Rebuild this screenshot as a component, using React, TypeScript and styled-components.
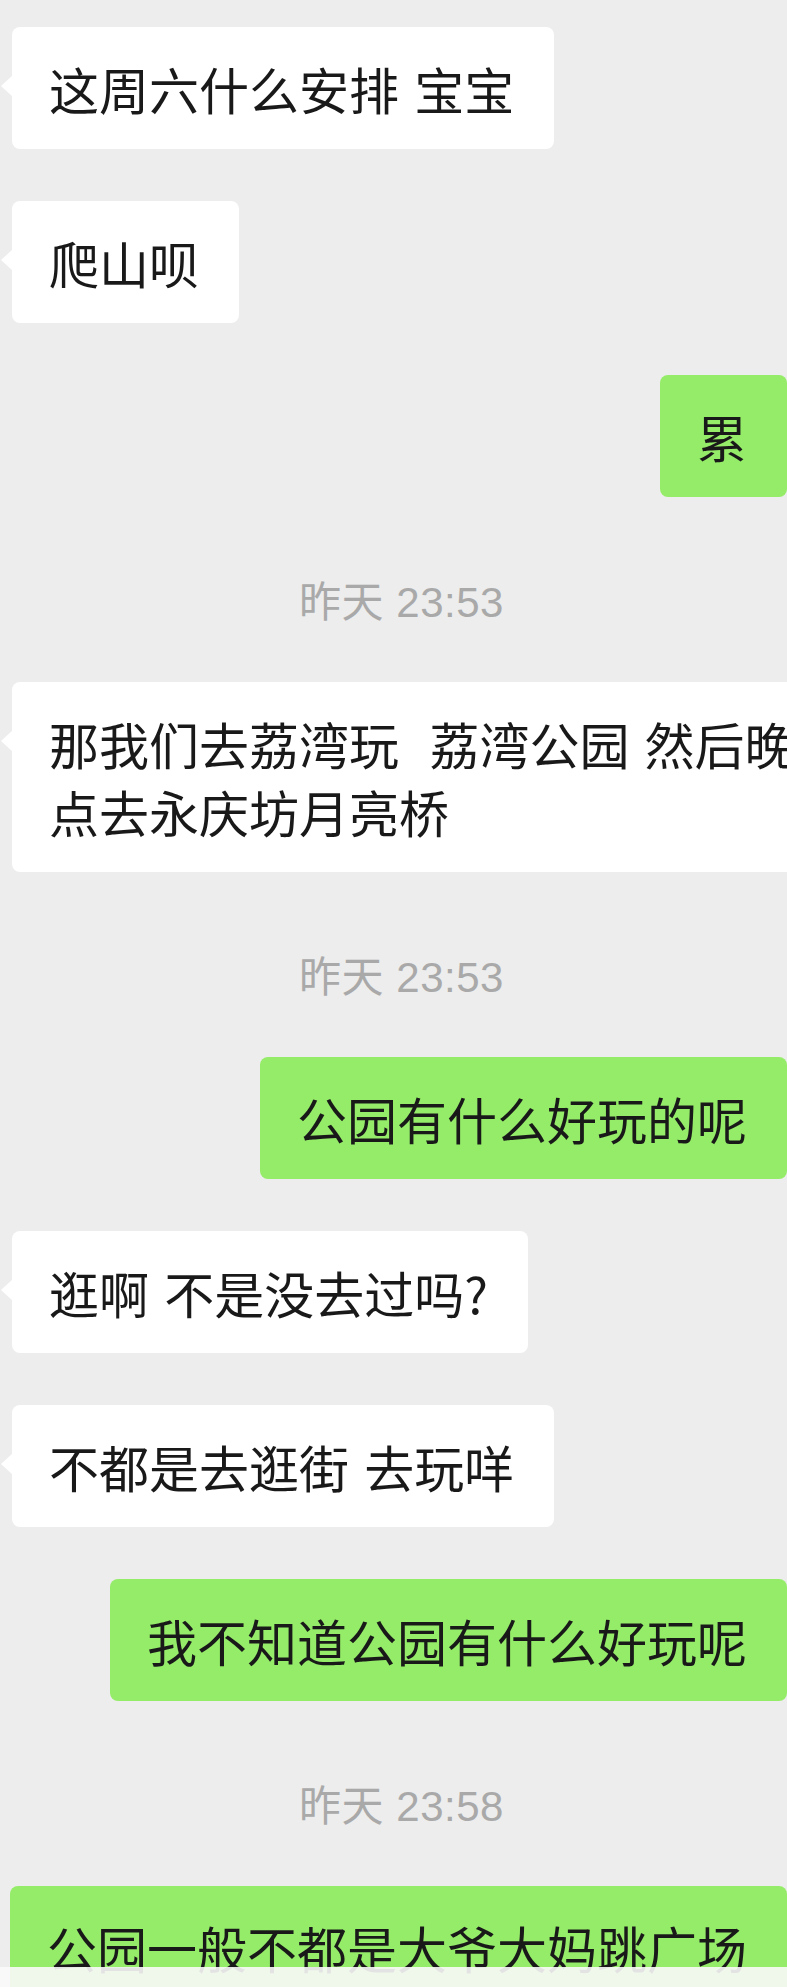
import { FC } from "react";
import styled, { createGlobalStyle } from "styled-components";

type Side = "left" | "right";

type ChatItem =
  | { kind: "msg"; side: Side; text: string }
  | { kind: "time"; text: string };

const chat: ChatItem[] = [
  { kind: "msg", side: "left", text: "这周六什么安排 宝宝" },
  { kind: "msg", side: "left", text: "爬山呗" },
  { kind: "msg", side: "right", text: "累" },
  { kind: "time", text: "昨天 23:53" },
  {
    kind: "msg",
    side: "left",
    text: "那我们去荔湾玩  荔湾公园 然后晚点去永庆坊月亮桥",
  },
  { kind: "time", text: "昨天 23:53" },
  { kind: "msg", side: "right", text: "公园有什么好玩的呢" },
  { kind: "msg", side: "left", text: "逛啊 不是没去过吗?" },
  { kind: "msg", side: "left", text: "不都是去逛街 去玩咩" },
  { kind: "msg", side: "right", text: "我不知道公园有什么好玩呢" },
  { kind: "time", text: "昨天 23:58" },
  { kind: "msg", side: "right", text: "公园一般不都是大爷大妈跳广场" },
];

const GlobalStyle = createGlobalStyle`
  html, body {
    margin: 0;
    padding: 0;
    background: #ededed;
  }
`;

const Viewport = styled.div`
  position: relative;
  width: 787px;
  height: 1987px;
  overflow: hidden;
  background: #ededed;
`;

// the original screen is a bit wider than the crop, so the right side runs off
const Thread = styled.div`
  width: 803px;
  display: flex;
  flex-direction: column;
  gap: 52px;
  padding-top: 27px;
`;

const Row = styled.div<{ $side: Side }>`
  display: flex;
  justify-content: ${(p) => (p.$side === "left" ? "flex-start" : "flex-end")};
  padding: ${(p) => (p.$side === "left" ? "0 0 0 12px" : "0 16px 0 0")};
`;

const Bubble = styled.div<{ $side: Side }>`
  position: relative;
  flex-shrink: 0;
  max-width: 845px;
  box-sizing: border-box;
  padding: 27px 40px 27px 37px;
  border-radius: 8px;
  background: ${(p) => (p.$side === "left" ? "#ffffff" : "#95ec69")};
  color: #191919;
  font-family: "Noto Sans CJK SC", sans-serif;
  font-size: 50px;
  line-height: 68px;
  word-spacing: 4px;
  white-space: pre-wrap;

  &::before {
    content: "";
    position: absolute;
    top: 48px;
    ${(p) => (p.$side === "left" ? "left: -11px;" : "right: -11px;")}
    border-top: 11px solid transparent;
    border-bottom: 11px solid transparent;
    ${(p) =>
      p.$side === "left"
        ? "border-right: 12px solid #ffffff;"
        : "border-left: 12px solid #95ec69;"}
  }
`;

const Timestamp = styled.div`
  height: 81px;
  box-sizing: border-box;
  padding: 33px 0 6px;
  text-align: center;
  color: #a9a9a9;
  font-family: "Liberation Sans", "Noto Sans CJK SC", sans-serif;
  font-size: 42px;
  line-height: 42px;
  letter-spacing: 0.5px;
`;

const BottomFade = styled.div`
  position: absolute;
  left: 0;
  right: 0;
  bottom: 0;
  height: 20px;
  background: rgba(250, 250, 250, 0.9);
`;

const App: FC = () => {
  return (
    <>
      <GlobalStyle />
      <Viewport>
        <Thread>
          {chat.map((item, i) =>
            item.kind === "time" ? (
              <Timestamp key={i}>{item.text}</Timestamp>
            ) : (
              <Row key={i} $side={item.side}>
                <Bubble $side={item.side}>{item.text}</Bubble>
              </Row>
            )
          )}
        </Thread>
        <BottomFade />
      </Viewport>
    </>
  );
};

export default App;
